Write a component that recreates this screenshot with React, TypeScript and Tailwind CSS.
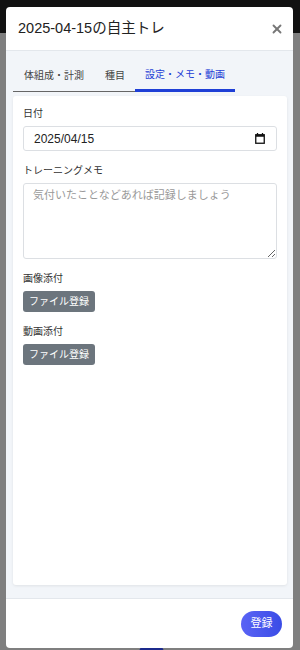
import { X } from 'lucide-react'

const FONT = { fontFamily: '"Liberation Sans", "Noto Sans CJK JP", sans-serif' }

// ─── Small pieces ─────────────────────────────────────────────────────────────

function Label({ children }: { children: string }) {
  return <div className="text-[10px] leading-[14px] text-[#333] mb-[5px]">{children}</div>
}

function FileButton() {
  return (
    <button className="flex items-center h-[21px] px-[6px] rounded-[3px] bg-[#6c757d] text-white text-[10px] leading-none">
      ファイル登録
    </button>
  )
}

function CalendarIcon() {
  return (
    <svg width="10" height="11" viewBox="0 0 10 11" fill="none">
      <rect x="0.75" y="1.75" width="8.5" height="8.5" stroke="#111" strokeWidth="1.3" />
      <rect x="0.75" y="1.75" width="8.5" height="2" fill="#111" />
      <path d="M2.5 0v2M7.5 0v2" stroke="#111" strokeWidth="1.3" />
    </svg>
  )
}

const TABS = ['体組成・計測', '種目', '設定・メモ・動画']

// ─── Page ─────────────────────────────────────────────────────────────────────

export default function App() {
  return (
    <div className="relative w-[300px] h-[650px] overflow-hidden bg-[#7f7f7f]" style={FONT}>
      {/* page behind the overlay */}
      <div className="h-[33px] bg-[#111]" />
      <div className="absolute left-[139px] top-[641px] w-[25px] h-[25px] rounded-full bg-[#1c2a8c]" />

      {/* Modal */}
      <div className="absolute left-[6px] top-[7px] w-[287px] h-[641px] bg-white rounded-[4px] flex flex-col overflow-hidden">
        {/* Header */}
        <div className="h-[44px] flex items-center justify-between pl-[12px] pr-[9px] border-b border-[#e3e7ec]">
          <h1 className="text-[14.5px] text-[#222]">2025-04-15の自主トレ</h1>
          <X className="w-[14px] h-[14px] text-[#777]" strokeWidth={3.2} />
        </div>

        {/* Body */}
        <div className="flex-1 bg-[#f2f5f9] pl-[7px] pr-[6px] pt-[8px] pb-[13px] flex flex-col">
          <div className="flex h-[33px]">
            {TABS.map((t, i) => (
              <div
                key={t}
                className={
                  i === 2
                    ? 'px-[10px] flex items-center text-[10px] text-[#1f3fd6] border-b-[3px] border-[#1f3fd6]'
                    : 'px-[10px] first:px-[11px] flex items-center text-[10px] text-[#444] border-b border-[#666]'
                }
              >
                {t}
              </div>
            ))}
          </div>

          <div className="mt-[4px] flex-1 bg-white rounded-[3px] shadow-[0_1px_3px_rgba(0,0,0,0.08)] px-[10px] pt-[11px]">
            <Label>日付</Label>
            <div className="h-[25px] border border-[#dcdfe3] rounded-[3px] flex items-center justify-between pl-[10px] pr-[11px]">
              <span className="text-[12px] text-[#222]">2025/04/15</span>
              <CalendarIcon />
            </div>

            <div className="mt-[13px]">
              <Label>トレーニングメモ</Label>
              <textarea
                className="block w-full h-[76px] border border-[#dcdfe3] rounded-[3px] px-[9px] py-[3px] text-[11px] placeholder:text-[#999] outline-none"
                placeholder="気付いたことなどあれば記録しましょう"
                style={FONT}
              />
            </div>

            <div className="mt-[13px]">
              <Label>画像添付</Label>
              <FileButton />
            </div>

            <div className="mt-[13px]">
              <Label>動画添付</Label>
              <FileButton />
            </div>
          </div>
        </div>

        {/* Footer */}
        <div className="h-[50px] border-t border-[#e3e7ec] flex items-center justify-end pr-[11px]">
          <button className="h-[26px] w-[41px] rounded-full bg-gradient-to-r from-[#5a63f5] to-[#3a4ce6] text-white text-[11px]">
            登録
          </button>
        </div>
      </div>
    </div>
  )
}
